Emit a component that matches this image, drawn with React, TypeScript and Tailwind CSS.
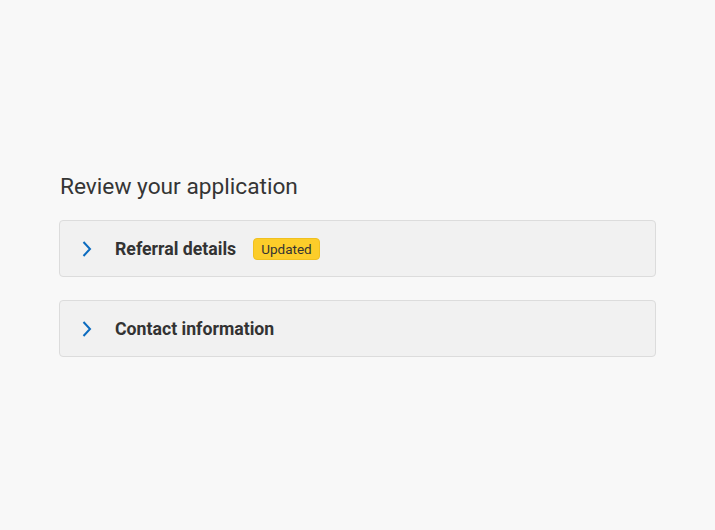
import React from "react";

function Chevron() {
  return (
    <svg width="12" height="18" viewBox="0 0 12 18" fill="none">
      <path d="M2.5 2 L9 9 L2.5 16" stroke="#0b6bbf" strokeWidth="2" strokeLinecap="butt" strokeLinejoin="miter" />
    </svg>
  );
}

function Row({ title, badge }: { title: string; badge?: string }) {
  return (
    <div className="h-[57px] rounded-[4px] border border-[#dcdcdc] bg-[#f1f1f1] flex items-center pl-[21px] pt-[1px]">
      <Chevron />
      <span className="ml-[22px] text-[17.7px] font-bold text-[#333333]">{title}</span>
      {badge && (
        <span className="ml-[17px] h-[22px] px-[7px] rounded-[4px] bg-[#fccd2a] border border-[#f0c020] text-[13.5px] text-[#333333] flex items-center">
          {badge}
        </span>
      )}
    </div>
  );
}

export default function App() {
  return (
    <div className="w-[715px] h-[530px] bg-[#f8f8f8] pt-[173px] px-[59px]" style={{ fontFamily: "Roboto, 'Liberation Sans', sans-serif" }}>
      <h1 className="text-[22.7px] font-normal text-[#353535] leading-[28px] pl-[1px]">Review your application</h1>
      <div className="mt-[19px] flex flex-col gap-[23px] w-[597px]">
        <Row title="Referral details" badge="Updated" />
        <Row title="Contact information" />
      </div>
    </div>
  );
}
